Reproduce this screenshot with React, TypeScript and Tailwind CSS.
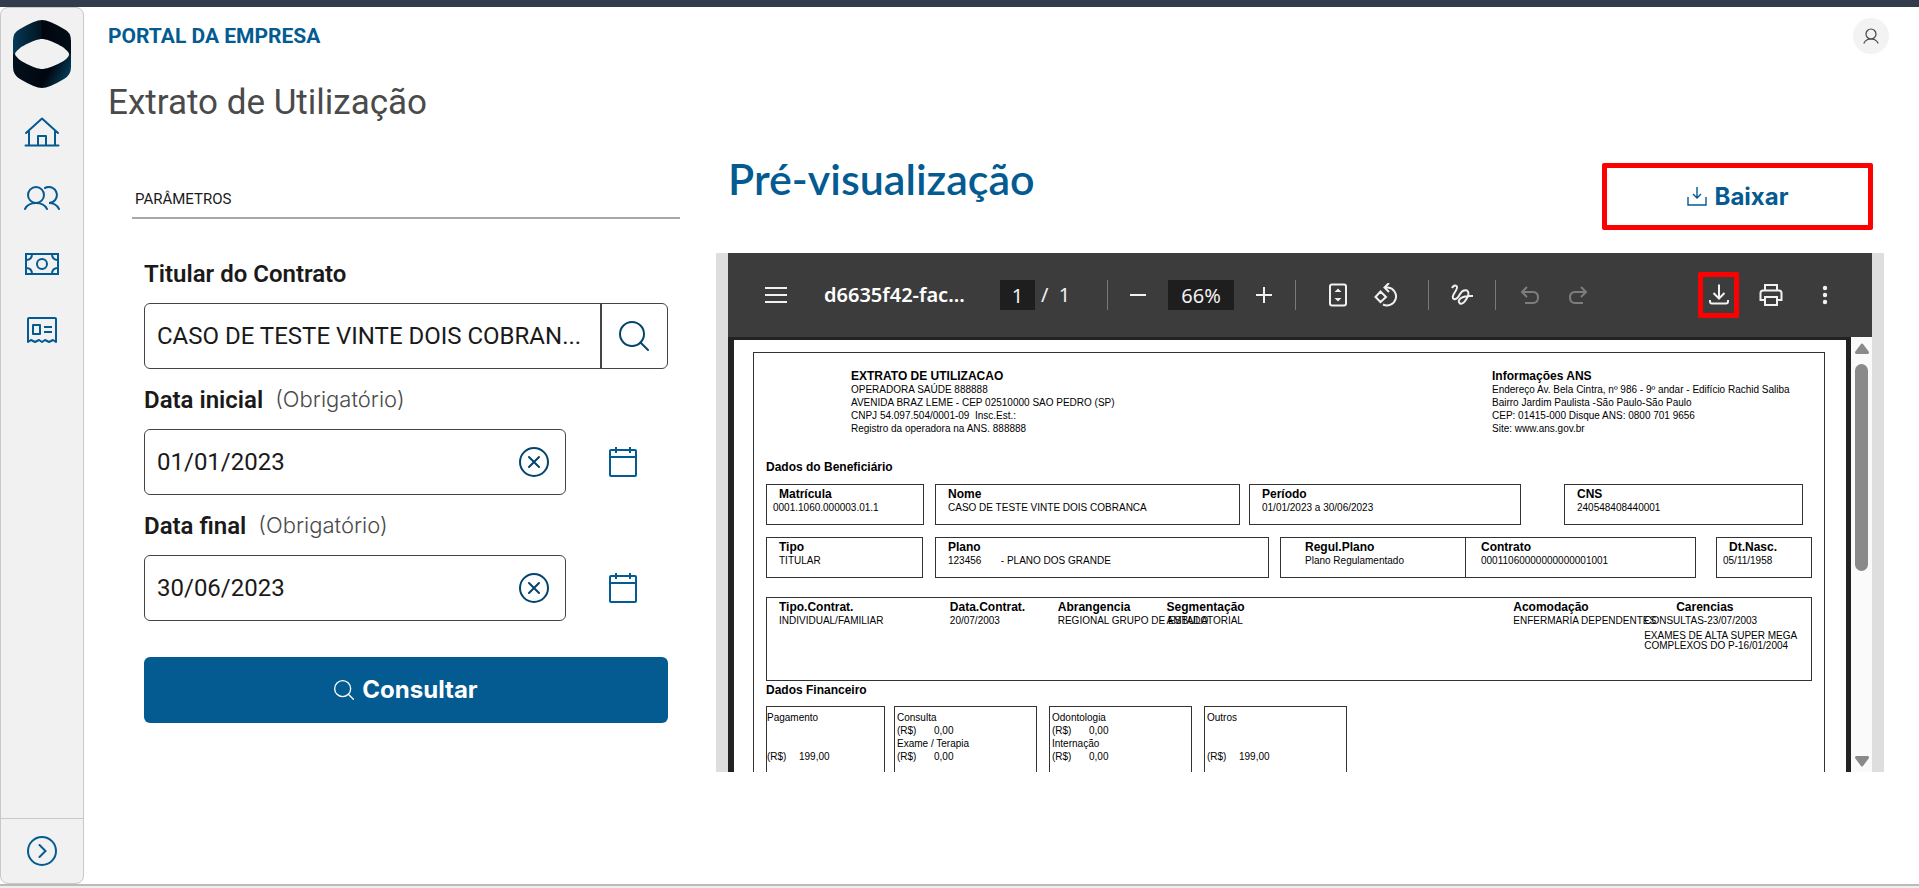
import type { ReactNode } from "react";

type IconProps = { className?: string };

function Logo() {
  return (
    <svg viewBox="0 0 58 68" className="h-[68px] w-[58px]" role="img" aria-label="Logo">
      <defs>
        <linearGradient id="logo-top" x1="0" x2="1">
          <stop offset="0" stopColor="#043a5a" />
          <stop offset="0.48" stopColor="#021420" />
          <stop offset="0.5" stopColor="#01060d" />
          <stop offset="1" stopColor="#020d16" />
        </linearGradient>
        <linearGradient id="logo-bottom" x1="0" x2="1" y1="0" y2="0.3">
          <stop offset="0" stopColor="#021320" />
          <stop offset="0.7" stopColor="#01060f" />
          <stop offset="1" stopColor="#04344f" />
        </linearGradient>
      </defs>
      <path d="M0 34V21Q0 12 7 9Q22 0 29 0T51 9Q58 12 58 21V34Z" fill="url(#logo-top)" />
      <path d="M0 34V47Q0 55 7 59Q22 68 29 68T51 59Q58 55 58 47V34Z" fill="url(#logo-bottom)" />
      <path d="M2 34C3 28 22 19 29 19S55 28 56 34S36 49 29 49S3 40 2 34Z" fill="#f1f1f1" />
    </svg>
  );
}

function HomeIcon() {
  return (
    <svg viewBox="0 0 36 30" className="h-[30px] w-9" fill="none" stroke="currentColor" strokeWidth="2" strokeLinecap="round" strokeLinejoin="round">
      <path d="M2 16L18 1.500L34 16M5 14V28.500M31 14V28.500M1.500 28.500H34.500M14 28V19H22V28" />
    </svg>
  );
}

function PeopleIcon() {
  return (
    <svg viewBox="0 0 36 24" className="h-6 w-9" fill="none" stroke="currentColor" strokeWidth="2" strokeLinecap="round">
      <circle cx="12" cy="9" r="8" />
      <path d="M1 23Q4 17 12 17T23 23M21 2A8 8 0 1 1 25 17Q32 17 35 23" />
    </svg>
  );
}

function MoneyIcon() {
  return (
    <svg viewBox="0 0 34 22" className="h-[22px] w-[34px]" fill="none" stroke="currentColor" strokeWidth="2">
      <rect x="1" y="1" width="32" height="20" />
      <circle cx="17" cy="11" r="5" />
      <path d="M1 7Q7 7 7 1M27 1Q27 7 33 7M33 15Q27 15 27 21M7 21Q7 15 1 15" />
    </svg>
  );
}

function ReceiptIcon() {
  return (
    <svg viewBox="0 0 30 27" className="h-[27px] w-[30px]" fill="none" stroke="currentColor" strokeWidth="2" strokeLinejoin="round">
      <path d="M1 25V2Q1 1 2 1H28Q29 1 29 2V25L26 23L22 25L18 23L15 25L12 23L8 25L4 23Z" />
      <rect x="6" y="8" width="7" height="9" />
      <path d="M17 10H25M17 15H25" />
    </svg>
  );
}

function ExpandIcon() {
  return (
    <svg viewBox="0 0 30 30" className="size-[30px]" fill="none" stroke="currentColor" strokeWidth="2" strokeLinecap="round">
      <circle cx="15" cy="15" r="14" />
      <path d="M12.500 9L18.500 15L12.500 21" />
    </svg>
  );
}

function SearchIcon({ className }: IconProps) {
  return (
    <svg viewBox="0 0 30 30" className={className} fill="none" stroke="currentColor" strokeWidth="2" strokeLinecap="round">
      <circle cx="13" cy="13" r="12" />
      <path d="M21.500 21.500L29 29" />
    </svg>
  );
}

function ClearIcon() {
  return (
    <svg viewBox="0 0 30 30" className="size-[30px]" fill="none" stroke="currentColor" strokeWidth="2" strokeLinecap="round">
      <circle cx="15" cy="15" r="14" />
      <path d="M10 10L20 20M20 10L10 20" />
    </svg>
  );
}

function CalendarIcon() {
  return (
    <svg viewBox="0 0 28 30" className="h-[30px] w-7" fill="none" stroke="currentColor" strokeWidth="2">
      <rect x="1" y="3" width="26" height="26" rx="1" />
      <path d="M1 10H27M7 0V6M21 0V6" />
    </svg>
  );
}

function UserIcon() {
  return (
    <svg viewBox="0 0 16 16" className="size-4" fill="none" stroke="#444" strokeWidth="1.200" strokeLinecap="round">
      <circle cx="8" cy="6" r="5" />
      <path d="M1 15Q3 11 8 11T15 15" />
    </svg>
  );
}

function TrayIcon() {
  return (
    <svg viewBox="0 0 20 20" className="size-5" fill="none" stroke="currentColor" strokeWidth="1.400">
      <path d="M1 10V18H19V10M10 0V11M6 7L10 11L14 7" />
    </svg>
  );
}

function BarIcon({ children }: { children: ReactNode }) {
  return (
    <svg viewBox="0 0 24 24" className="size-6" fill="none" stroke="currentColor" strokeWidth="2">
      {children}
    </svg>
  );
}

function BarButton({ label, className, children }: { label: string; className: string; children: ReactNode }) {
  return (
    <button type="button" aria-label={label} className={`flex size-6 shrink-0 items-center justify-center ${className}`}>
      <BarIcon>{children}</BarIcon>
    </button>
  );
}

function Separator({ className }: IconProps) {
  return <span className={`h-[30px] w-px shrink-0 bg-[#7a7a7a] ${className}`} />;
}

function Sidebar() {
  return (
    <aside className="flex w-[84px] shrink-0 flex-col rounded-lg border border-[#c8c8c8] bg-[#f1f1f1] text-[#035b91]">
      <div className="flex justify-center pt-3">
        <Logo />
      </div>
      <nav className="mt-[11px] flex flex-col">
        <a href="#inicio" aria-label="Início" className="flex h-[66px] items-center justify-center"><HomeIcon /></a>
        <a href="#beneficiarios" aria-label="Beneficiários" className="flex h-[66px] items-center justify-center"><PeopleIcon /></a>
        <a href="#financeiro" aria-label="Financeiro" className="flex h-[66px] items-center justify-center"><MoneyIcon /></a>
        <a href="#extratos" aria-label="Extratos" className="flex h-[66px] items-center justify-center"><ReceiptIcon /></a>
      </nav>
      <button type="button" aria-label="Expandir menu" className="mt-auto flex h-[65px] items-center justify-center border-t border-[#c8c8c8]">
        <ExpandIcon />
      </button>
    </aside>
  );
}

function DateField({ id, label, value }: { id: string; label: string; value: string }) {
  return (
    <div>
      <label htmlFor={id} className="flex h-[60px] items-center gap-3 pt-[2px] text-2xl font-semibold text-[#1a1a1a]">
        {label}
        <span className="font-[Inter] text-[22px] font-light text-[#4a4a4a]">(Obrigatório)</span>
      </label>
      <div className="flex items-center">
        <div className="flex h-[66px] min-w-0 flex-1 items-center rounded-md border border-[#444] pr-4 pl-3">
          <input id={id} defaultValue={value} className="min-w-0 flex-1 text-2xl text-[#1a1a1a] outline-none" />
          <button type="button" aria-label="Limpar" className="text-[#03446d]"><ClearIcon /></button>
        </div>
        <button type="button" aria-label="Abrir calendário" className="mr-[31px] ml-[43px] text-[#035b91]"><CalendarIcon /></button>
      </div>
    </div>
  );
}

function ParametersForm() {
  return (
    <section>
      <h2 className="border-b-2 border-[#a8a8a8] pt-6 pb-[6px] pl-[3px] text-[15px] leading-6 text-[#1a1a1a]">PARÂMETROS</h2>
      <form className="mt-6 px-3">
        <label htmlFor="titular" className="flex h-[60px] items-center pt-[2px] text-2xl font-semibold text-[#1a1a1a]">Titular do Contrato</label>
        <div className="flex h-[66px] rounded-md border border-[#444]">
          <input
            id="titular"
            defaultValue="CASO DE TESTE VINTE DOIS COBRAN..."
            className="min-w-0 flex-1 pl-3 text-2xl text-[#1a1a1a] outline-none"
          />
          <button type="button" aria-label="Buscar titular" className="flex w-[67px] items-center justify-center border-l-2 border-[#444] pr-[2px] text-[#03446d]">
            <SearchIcon className="size-[30px]" />
          </button>
        </div>
        <DateField id="data-inicial" label="Data inicial" value="01/01/2023" />
        <DateField id="data-final" label="Data final" value="30/06/2023" />
        <button type="button" className="mt-9 flex h-[66px] w-full items-center justify-center gap-2 rounded-md bg-[#035b91] font-[Inter] text-2xl font-bold text-white">
          <SearchIcon className="size-5" />
          Consultar
        </button>
      </form>
    </section>
  );
}

function ViewerToolbar() {
  return (
    <div className="flex h-[84px] items-center bg-[#3c3c3c] pr-[35px] pl-9 font-['Noto_Sans'] text-xl text-[#f1f1f1]">
      <BarButton label="Menu" className="">
        <path d="M1 5H23M1 12H23M1 19H23" />
      </BarButton>
      <span className="ml-9 w-[143px] shrink-0 font-semibold whitespace-nowrap text-white">d6635f42-fac...</span>
      <input aria-label="Página" defaultValue="1" className="ml-[33px] h-[30px] w-[35px] shrink-0 bg-[#1e1e1e] text-center outline-none" />
      <span className="ml-[6px] w-[66px] shrink-0 whitespace-pre">/  1</span>
      <Separator className="" />
      <BarButton label="Diminuir zoom" className="ml-[18px]">
        <path d="M4 12H20" />
      </BarButton>
      <input aria-label="Zoom" defaultValue="66%" className="ml-[18px] h-[30px] w-[66px] shrink-0 bg-[#1e1e1e] text-center outline-none" />
      <BarButton label="Aumentar zoom" className="ml-[18px]">
        <path d="M4 12H20M12 4V20" />
      </BarButton>
      <Separator className="ml-[19px]" />
      <BarButton label="Ajustar à página" className="ml-[30px]">
        <rect x="4" y="1.500" width="16" height="21" rx="2" />
        <path d="M8.500 9L12 5.500L15.500 9ZM8.500 15L12 18.500L15.500 15Z" fill="currentColor" stroke="none" />
      </BarButton>
      <BarButton label="Girar" className="ml-6">
        <path d="M6.500 8.500L12 14L6.500 19L1.500 14ZM15 0L10.500 4.500L15 9M11 4.500H14A9 9 0 1 1 9 21.500" />
      </BarButton>
      <Separator className="ml-[30px]" />
      <BarButton label="Desenhar" className="ml-[21px]">
        <path d="M2 5Q4 1.500 6.500 3Q8 4.500 5 9Q1 15 4 16Q7 17 10 11Q13 6 17 7.500Q20 10 17 15Q13 22 10 20.500Q7 18 11 15Q15 12.500 23 13" />
      </BarButton>
      <Separator className="ml-[21px]" />
      <BarButton label="Desfazer" className="ml-[22px] text-[#7d7d7d]">
        <path d="M9 4L4 9L9 14M4 9H15Q20 9 20 14.500T15 20H7" />
      </BarButton>
      <BarButton label="Refazer" className="ml-6 text-[#7d7d7d]">
        <path d="M15 4L20 9L15 14M20 9H9Q4 9 4 14.500T9 20H17" />
      </BarButton>
      <button type="button" aria-label="Baixar PDF" className="ml-auto flex h-[46px] w-[41px] shrink-0 items-center justify-center rounded-xs border-5 border-[#f00]">
        <BarIcon>
          <path d="M12 1.500V15M6.500 10L12 15.500L17.500 10M3 17V18.500Q3 20.500 5 20.500H19Q21 20.500 21 18.500V17" />
        </BarIcon>
      </button>
      <BarButton label="Imprimir" className="ml-5">
        <path d="M6 7V2H18V7M5 17H1.500V10Q1.500 7.500 4 7.500H20Q22.500 7.500 22.500 10V17H19M6 14H18V22H6Z" />
      </BarButton>
      <BarButton label="Mais opções" className="ml-[30px]">
        <g fill="currentColor" stroke="none">
          <circle cx="12" cy="5" r="2.200" />
          <circle cx="12" cy="12" r="2.200" />
          <circle cx="12" cy="19" r="2.200" />
        </g>
      </BarButton>
    </div>
  );
}

function DocBox({ label, value, className, valueClassName = "" }: { label: string; value: string; className: string; valueClassName?: string }) {
  return (
    <div className={`h-[41px] min-w-0 border border-[#333] pt-[3px] whitespace-pre ${className}`}>
      <dt className="text-xs leading-[13px] font-bold">{label}</dt>
      <dd className={valueClassName}>{value}</dd>
    </div>
  );
}

function Amount({ value, className }: { value: string; className: string }) {
  return (
    <div className="flex">
      <span className={className}>(R$)</span>
      <span>{value}</span>
    </div>
  );
}

function Statement() {
  return (
    <div className="min-w-0 flex-1 bg-white pt-3 pr-[21px] pl-[19px]">
      <div className="h-full border border-b-0 border-[#333] px-3 font-['Liberation_Sans'] text-[10px] leading-[13px] text-black">
        <div className="grid grid-cols-[726fr_320fr] pt-4 whitespace-pre">
          <div className="min-w-0 pl-[85px]">
            <h3 className="text-xs leading-[14px] font-bold">EXTRATO DE UTILIZACAO</h3>
            <p>OPERADORA SAÚDE 888888</p>
            <p>AVENIDA BRAZ LEME - CEP 02510000 SAO PEDRO (SP)</p>
            <p>CNPJ 54.097.504/0001-09  Insc.Est.:</p>
            <p>Registro da operadora na ANS. 888888</p>
          </div>
          <div className="min-w-0">
            <h3 className="text-xs leading-[14px] font-bold">Informações ANS</h3>
            <p>Endereço Av. Bela Cintra, nº 986 - 9º andar - Edifício Rachid Saliba</p>
            <p>Bairro Jardim Paulista -São Paulo-São Paulo</p>
            <p>CEP: 01415-000 Disque ANS: 0800 701 9656</p>
            <p>Site: www.ans.gov.br</p>
          </div>
        </div>

        <h3 className="mt-[25px] text-xs leading-[14px] font-bold">Dados do Beneficiário</h3>
        <dl className="mt-[10px] grid grid-cols-[169fr_314fr_315fr_248fr]">
          <DocBox label="Matrícula" value="0001.1060.000003.01.1" className="mr-[11px] pl-3" valueClassName="-ml-[6px]" />
          <DocBox label="Nome" value="CASO DE TESTE VINTE DOIS COBRANCA" className="mr-[9px] pl-3" />
          <DocBox label="Período" value="01/01/2023 a 30/06/2023" className="mr-[43px] pl-3" />
          <DocBox label="CNS" value="240548408440001" className="mr-[9px] pl-3" />
        </dl>
        <dl className="mt-3 grid grid-cols-[169fr_345fr_185fr_251fr_96fr]">
          <DocBox label="Tipo" value="TITULAR" className="mr-3 pl-3" />
          <DocBox label="Plano" value={"123456       - PLANO DOS GRANDE"} className="mr-[11px] pl-3" />
          <DocBox label="Regul.Plano" value="Plano Regulamentado" className="-mr-3 pl-6" />
          <DocBox label="Contrato" value="00011060000000000001001" className="z-10 mr-5 bg-white pl-[15px]" />
          <DocBox label="Dt.Nasc." value="05/11/1958" className="pl-3" valueClassName="-ml-[6px]" />
        </dl>

        <dl className="mt-[19px] grid h-[84px] grid-cols-[171fr_108fr_109fr_347fr_131fr_167fr] border border-[#333] pt-[3px] pl-3 whitespace-pre">
          <div className="min-w-0">
            <dt className="text-xs leading-[13px] font-bold">Tipo.Contrat.</dt>
            <dd>INDIVIDUAL/FAMILIAR</dd>
          </div>
          <div className="min-w-0">
            <dt className="text-xs leading-[13px] font-bold">Data.Contrat.</dt>
            <dd>20/07/2003</dd>
          </div>
          <div className="min-w-0">
            <dt className="text-xs leading-[13px] font-bold">Abrangencia</dt>
            <dd>REGIONAL GRUPO DE ESTADO</dd>
          </div>
          <div className="min-w-0">
            <dt className="text-xs leading-[13px] font-bold">Segmentação</dt>
            <dd>AMBULATORIAL</dd>
          </div>
          <div className="min-w-0">
            <dt className="text-xs leading-[13px] font-bold">Acomodação</dt>
            <dd>ENFERMARIA DEPENDENTES</dd>
          </div>
          <div className="min-w-0">
            <dt className="pl-8 text-xs leading-[13px] font-bold">Carencias</dt>
            <dd>CONSULTAS-23/07/2003</dd>
            <dd className="mt-1 leading-[10px]">EXAMES DE ALTA SUPER MEGA</dd>
            <dd className="leading-[10px]">COMPLEXOS DO P-16/01/2004</dd>
          </div>
        </dl>

        <h3 className="mt-[2px] text-xs leading-[14px] font-bold">Dados Financeiro</h3>
        <div className="mt-[9px] grid grid-cols-[128fr_155fr_155fr_143fr_465fr] whitespace-pre">
          <div className="mr-[9px] h-[66px] min-w-0 border border-b-0 border-[#333] pt-1">
            <p>Pagamento</p>
            <div className="mt-[26px]"><Amount value="199,00" className="w-8" /></div>
          </div>
          <div className="mr-3 h-[66px] min-w-0 border border-b-0 border-[#333] pt-1 pl-[2px]">
            <p>Consulta</p>
            <Amount value="0,00" className="w-[37px]" />
            <p>Exame / Terapia</p>
            <Amount value="0,00" className="w-[37px]" />
          </div>
          <div className="mr-3 h-[66px] min-w-0 border border-b-0 border-[#333] pt-1 pl-[2px]">
            <p>Odontologia</p>
            <Amount value="0,00" className="w-[37px]" />
            <p>Internação</p>
            <Amount value="0,00" className="w-[37px]" />
          </div>
          <div className="h-[66px] min-w-0 border border-b-0 border-[#333] pt-1 pl-[2px]">
            <p>Outros</p>
            <div className="mt-[26px]"><Amount value="199,00" className="w-8" /></div>
          </div>
        </div>
      </div>
    </div>
  );
}

function ScrollTrack() {
  return (
    <div className="flex w-[21px] shrink-0 flex-col items-center bg-[#fafafa] pt-[6px] pb-[5px]">
      <svg viewBox="0 0 14 11" className="h-[11px] w-[14px]" fill="#8a8a8a">
        <path d="M6 1Q7 0 8 1L14 9Q14 11 13 11H1Q0 11 0 9Z" />
      </svg>
      <div className="mt-[10px] h-[207px] w-[13px] rounded-full bg-[#8a8a8a]" />
      <svg viewBox="0 0 14 11" className="mt-auto h-[11px] w-[14px]" fill="#8a8a8a">
        <path d="M6 10Q7 11 8 10L14 2Q14 0 13 0H1Q0 0 0 2Z" />
      </svg>
    </div>
  );
}

function Preview() {
  return (
    <section className="min-w-0">
      <div className="flex items-start justify-between pr-[11px] pl-3">
        <h2 className="font-[Lato] text-[43px] leading-8 font-semibold text-[#035b91]">Pré-visualização</h2>
        <button type="button" className="flex h-[67px] w-[271px] items-center justify-center gap-2 rounded-xs border-5 border-[#f00] font-[Inter] text-2xl font-bold text-[#035b91]">
          <TrayIcon />
          Baixar
        </button>
      </div>
      <div className="mt-[23px] bg-[#dedede] px-3">
        <ViewerToolbar />
        <div className="flex bg-[#222]">
          <div className="flex min-w-0 flex-1 overflow-hidden pt-[3px] pr-[5px] pl-[6px]">
            <Statement />
          </div>
          <ScrollTrack />
        </div>
      </div>
    </section>
  );
}

export default function App() {
  return (
    <div className="flex min-h-screen flex-col bg-white font-[Roboto]">
      <div className="h-[7px] bg-[#323c4d]" />
      <div className="flex flex-1">
        <Sidebar />
        <main className="min-w-0 flex-1 pl-6">
          <header className="flex h-[58px] items-center justify-between pr-[30px]">
            <span className="pt-[2px] text-[21px] font-bold text-[#035b91]">PORTAL DA EMPRESA</span>
            <button type="button" aria-label="Perfil" className="flex size-9 items-center justify-center rounded-full bg-[#f3f3f3]">
              <UserIcon />
            </button>
          </header>
          <h1 className="mt-[13px] text-[35px] leading-[50px] font-normal text-[#4a4a4a]">Extrato de Utilização</h1>
          <div className="mt-[35px] grid grid-cols-[548fr_1168fr] gap-9 pr-[35px] pl-6">
            <ParametersForm />
            <Preview />
          </div>
        </main>
      </div>
      <div className="h-1 border-t-2 border-[#bbb] bg-[#eee]" />
    </div>
  );
}
